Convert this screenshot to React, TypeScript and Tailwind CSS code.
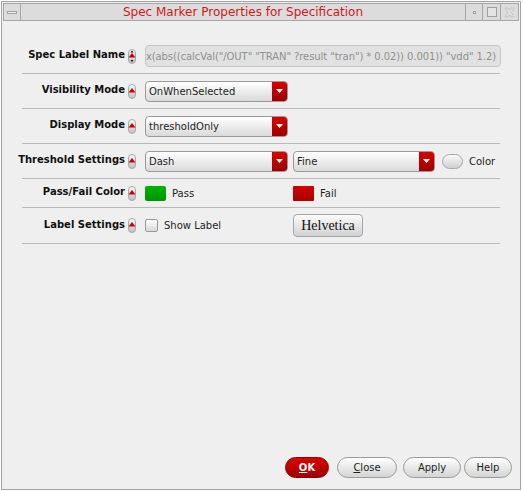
import React from "react";

const Indicator = ({ arrows = false }: { arrows?: boolean }) => (
  <svg width="8" height="15" viewBox="0 0 8 15" className="shrink-0">
    <defs>
      <linearGradient id="indg" x1="0" x2="0" y1="0" y2="1">
        <stop offset="0" stopColor="#fbfbfb" />
        <stop offset="1" stopColor="#bdbdbd" />
      </linearGradient>
    </defs>
    <rect x="0.5" y="0.5" width="7" height="14" rx="3.5" fill="url(#indg)" stroke="#a9a9a9" />
    <path d="M4 4 L7.5 8.5 L0.5 8.5 Z" fill="#c80000" />
    {arrows && (
      <>
        <path d="M4 1.5 L5.5 3.5 L2.5 3.5 Z" fill="#111" />
        <path d="M4 13 L5.5 11 L2.5 11 Z" fill="#111" />
      </>
    )}
  </svg>
);

const Combo = ({ value, w }: { value: string; w: string }) => (
  <div
    className={`flex h-[21px] ${w} overflow-hidden rounded-[4px] border border-[#9a9a9a] bg-linear-to-b from-white to-[#dadada]`}
  >
    <span className="flex-1 pl-[3px] leading-[19px] text-[#1e1e1e]">{value}</span>
    <span className="flex w-[15px] items-center justify-center bg-linear-to-b from-[#dc0000] to-[#9c0000]">
      <svg width="7" height="4" viewBox="0 0 7 4">
        <path d="M0 0 H7 L3.5 4 Z" fill="#fff" />
      </svg>
    </span>
  </div>
);

const Row = ({
  label,
  h,
  arrows,
  children,
}: {
  label: string;
  h: string;
  arrows?: boolean;
  children: React.ReactNode;
}) => (
  <div className={`flex ${h} items-center border-b border-[#b9b9b9]`}>
    <div className="mb-[3px] flex w-[103px] shrink-0 justify-end">
      <span className="whitespace-nowrap font-bold text-[#111]">{label}</span>
    </div>
    <span className="ml-[3px] flex">
      <Indicator arrows={arrows} />
    </span>
    <div className="ml-[9px] flex items-center">{children}</div>
  </div>
);

const PillButton = ({ children, w }: { children: React.ReactNode; w: string }) => (
  <button
    className={`h-[21px] ${w} rounded-full border border-[#9a9a9a] bg-linear-to-b from-white to-[#d4d4d4] text-[#1e1e1e]`}
  >
    {children}
  </button>
);

export default function App() {
  return (
    <div className="h-[491px] w-[523px] bg-white pl-[1px] pt-[1px] font-['DejaVu_Sans',sans-serif] text-[10px]">
      <div className="flex h-[489px] w-[520px] flex-col border border-[#a3a3a3] bg-[#efefef]">
        {/* Title bar */}
        <div className="mx-[1px] mt-[1px] flex h-[18px] border border-[#a6a6a6] bg-[#dcdcdc]">
          <div className="flex w-[17px] items-center justify-center border-r border-[#a6a6a6]">
            <span className="h-[3px] w-[10px] border border-[#a0a0a0] bg-[#eeeeee]" />
          </div>
          <div className="flex-1 text-center text-[12px] leading-[16px] text-[#d01818]">
            Spec Marker Properties for Specification
          </div>
          <div className="flex w-[17px] items-center justify-center border-l border-[#a6a6a6]">
            <span className="h-[3px] w-[3px] border border-[#a0a0a0] bg-[#f4f4f4]" />
          </div>
          <div className="flex w-[18px] items-center justify-center border-l border-[#a6a6a6]">
            <span className="h-[10px] w-[10px] border border-[#a0a0a0] bg-[#e4e4e4]" />
          </div>
          <div className="flex w-[18px] items-center justify-center border-l border-[#a6a6a6]">
            <svg width="11" height="11" viewBox="0 0 11 11">
              <path
                d="M1 1 L4 1 L5.5 3 L7 1 L10 1 L7.5 5.5 L10 10 L7 10 L5.5 8 L4 10 L1 10 L3.5 5.5 Z"
                fill="none"
                stroke="#bdbdbd"
                strokeDasharray="1.5 1"
              />
            </svg>
          </div>
        </div>

        {/* Form rows */}
        <div className="ml-[20px] mt-[18px] w-[478px]">
          <Row label="Spec Label Name" h="h-[35px]" arrows>
            <div className="flex h-[22px] w-[356px] items-center justify-end overflow-hidden whitespace-nowrap rounded-[4px] border border-[#c6c6c6] bg-[#e1e1e1] pr-[4px] tracking-[-0.08px] text-[#909090]">
              x(abs((calcVal("/OUT" "TRAN" ?result "tran") * 0.02)) 0.001)) "vdd" 1.2)
            </div>
          </Row>
          <Row label="Visibility Mode" h="h-[35px]">
            <Combo value="OnWhenSelected" w="w-[143px]" />
          </Row>
          <Row label="Display Mode" h="h-[35px]">
            <Combo value="thresholdOnly" w="w-[143px]" />
          </Row>
          <Row label="Threshold Settings" h="h-[35px]">
            <Combo value="Dash" w="w-[143px]" />
            <div className="ml-[5px]">
              <Combo value="Fine" w="w-[142px]" />
            </div>
            <span className="ml-[7px] h-[15px] w-[21px] rounded-full border border-[#a8a8a8] bg-linear-to-b from-[#fafafa] to-[#cfcfcf]" />
            <span className="ml-[6px] text-[#1e1e1e]">Color</span>
          </Row>
          <Row label="Pass/Fail Color" h="h-[29px]">
            <div className="flex w-[148px] items-center">
              <span className="h-[15px] w-[21px] rounded-[2px] bg-linear-to-b from-[#00b400] to-[#009400]" />
              <span className="ml-[6px] text-[#1e1e1e]">Pass</span>
            </div>
            <span className="h-[15px] w-[21px] rounded-[1px] bg-linear-to-b from-[#d40000] to-[#a80000]" />
            <span className="ml-[6px] text-[#1e1e1e]">Fail</span>
          </Row>
          <Row label="Label Settings" h="h-[36px]">
            <div className="flex w-[148px] items-center">
              <span className="h-[13px] w-[13px] rounded-[2px] border border-[#9a9a9a] bg-linear-to-b from-white to-[#d8d8d8]" />
              <span className="ml-[6px] text-[#1e1e1e]">Show Label</span>
            </div>
            <button className="h-[23px] w-[70px] rounded-[4px] border border-[#a6a6a6] bg-linear-to-b from-[#fbfbfb] to-[#d2d2d2] font-['Liberation_Serif',serif] text-[14px] text-[#111]">
              Helvetica
            </button>
          </Row>
        </div>

        <div className="flex-1" />

        {/* Bottom buttons */}
        <div className="flex items-center justify-end pb-[11px] pr-[8px]">
          <button className="h-[21px] w-[44px] rounded-full border border-[#8a0000] bg-linear-to-b from-[#dc0000] to-[#a00000] font-bold text-white">
            <span className="underline">O</span>K
          </button>
          <div className="ml-[8px]">
            <PillButton w="w-[60px]">
              <span className="underline">C</span>lose
            </PillButton>
          </div>
          <div className="ml-[6px]">
            <PillButton w="w-[58px]">Apply</PillButton>
          </div>
          <div className="ml-[3px]">
            <PillButton w="w-[48px]">Help</PillButton>
          </div>
        </div>
      </div>
    </div>
  );
}
